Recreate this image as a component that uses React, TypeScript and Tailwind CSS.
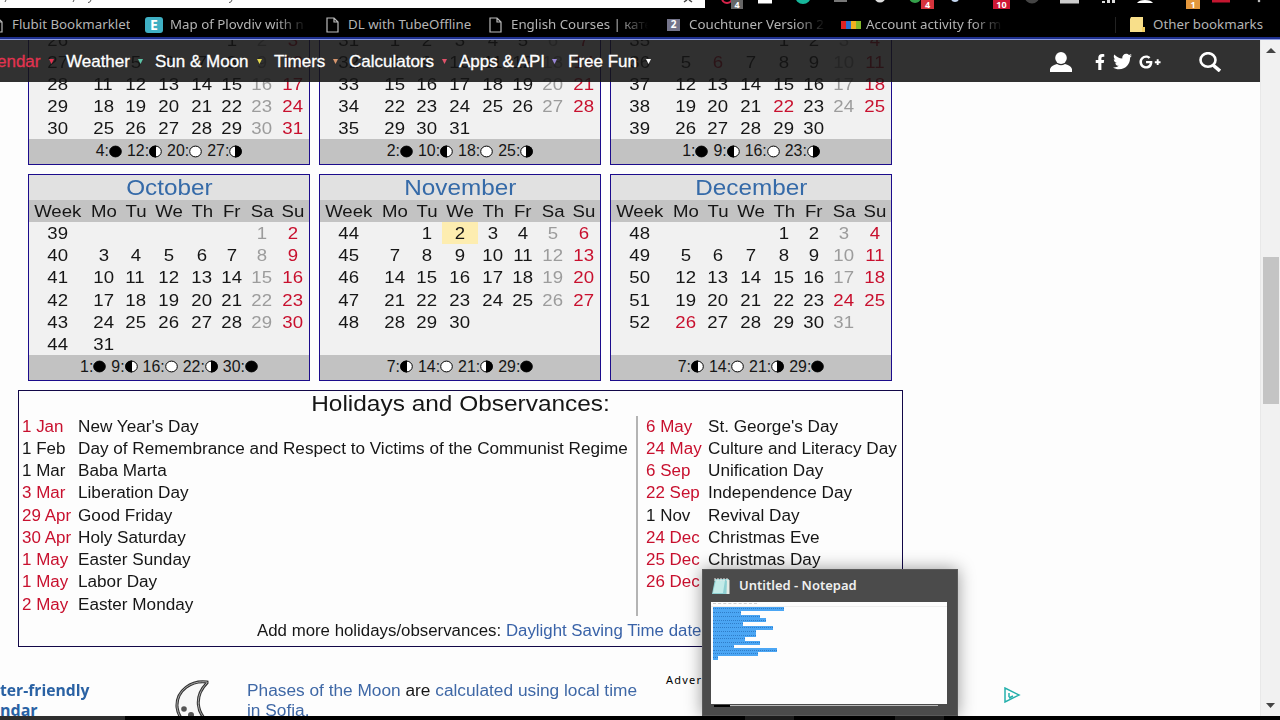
import { Fragment, type ReactNode } from 'react';
import { FaFacebookF, FaGooglePlusG, FaTwitter } from 'react-icons/fa';
import clsx from 'clsx';

type Phase = 'new' | 'first' | 'full' | 'last';

interface Month {
  name: string;
  firstWeek: number;
  // empty cells before day 1
  offset: number;
  days: number;
  rows: number;
  holidays: number[];
  today?: number;
  moons: [number, Phase][];
}

const topMonths: Month[] = [
  { name: 'July', firstWeek: 26, offset: 4, days: 31, rows: 5, holidays: [], moons: [[4, 'new'], [12, 'first'], [20, 'full'], [27, 'last']] },
  { name: 'August', firstWeek: 31, offset: 0, days: 31, rows: 5, holidays: [], moons: [[2, 'new'], [10, 'first'], [18, 'full'], [25, 'last']] },
  { name: 'September', firstWeek: 35, offset: 3, days: 30, rows: 5, holidays: [6, 22], moons: [[1, 'new'], [9, 'first'], [16, 'full'], [23, 'last']] },
];

const bottomMonths: Month[] = [
  { name: 'October', firstWeek: 39, offset: 5, days: 31, rows: 6, holidays: [], moons: [[1, 'new'], [9, 'first'], [16, 'full'], [22, 'last'], [30, 'new']] },
  { name: 'November', firstWeek: 44, offset: 1, days: 30, rows: 6, holidays: [], today: 2, moons: [[7, 'first'], [14, 'full'], [21, 'last'], [29, 'new']] },
  { name: 'December', firstWeek: 48, offset: 3, days: 31, rows: 6, holidays: [24, 26], moons: [[7, 'first'], [14, 'full'], [21, 'last'], [29, 'new']] },
];

const leftHolidays: [string, string, boolean][] = [
  ['1 Jan', "New Year's Day", true],
  ['1 Feb', 'Day of Remembrance and Respect to Victims of the Communist Regime', false],
  ['1 Mar', 'Baba Marta', false],
  ['3 Mar', 'Liberation Day', true],
  ['29 Apr', 'Good Friday', true],
  ['30 Apr', 'Holy Saturday', true],
  ['1 May', 'Easter Sunday', true],
  ['1 May', 'Labor Day', true],
  ['2 May', 'Easter Monday', true],
];

const rightHolidays: [string, string, boolean][] = [
  ['6 May', "St. George's Day", true],
  ['24 May', 'Culture and Literacy Day', true],
  ['6 Sep', 'Unification Day', true],
  ['22 Sep', 'Independence Day', true],
  ['1 Nov', 'Revival Day', false],
  ['24 Dec', 'Christmas Eve', true],
  ['25 Dec', 'Christmas Day', true],
  ['26 Dec', '', true],
];

const MONTH_GRID = 'grid grid-cols-[57.5px_34px_30px_36px_30.5px_29.5px_30.5px_32px]';

function Wide({ children, className = 'scale-x-[1.07]' }: { children: ReactNode; className?: string }) {
  return <span className={clsx('inline-block whitespace-nowrap', className)}>{children}</span>;
}

function Moon({ phase }: { phase: Phase }) {
  return (
    <svg width="13" height="13" viewBox="0 0 13 13" className="shrink-0">
      <ellipse cx="6.5" cy="6.5" rx="5.8" ry="5.4" fill={phase === 'new' ? '#000' : '#fff'} stroke="#000" />
      {phase === 'first' && <path d="M7 0.600H6.500A6.300 5.900 0 0 0 6.500 12.400H7z" />}
      {phase === 'last' && <path d="M6 0.600H6.500A6.300 5.900 0 0 1 6.500 12.400H6z" />}
    </svg>
  );
}

function MonthCard({ month }: { month: Month }) {
  const weeks = Array.from({ length: month.rows }, (_, i) => i);
  return (
    <div className="w-[282px] border border-[#1c0c8c] bg-[#f1f1f1] text-[17.4px] text-[#161616]">
      <div className="flex h-[25px] items-center justify-center bg-[#e1e1e1] text-[22.7px] text-[#356aa8]">
        <Wide>{month.name}</Wide>
      </div>
      <div className={clsx(MONTH_GRID, 'h-[22px] bg-[#c3c3c3] text-center leading-[22px]')}>
        {['Week', 'Mo', 'Tu', 'We', 'Th', 'Fr', 'Sa', 'Su'].map((d) => (
          <Wide key={d}>{d}</Wide>
        ))}
      </div>
      <div className={MONTH_GRID}>
        {weeks.map((w) => (
          <Fragment key={w}>
            <div className="h-[22.2px] text-center leading-[22.2px]">
              {w * 7 + 1 - month.offset <= month.days && <Wide>{month.firstWeek + w}</Wide>}
            </div>
            {[0, 1, 2, 3, 4, 5, 6].map((d) => {
              const day = w * 7 + d + 1 - month.offset;
              const shown = day >= 1 && day <= month.days;
              const red = d === 6 || month.holidays.includes(day);
              return (
                <div
                  key={d}
                  className={clsx(
                    'h-[22.2px] text-center leading-[22.2px]',
                    red ? 'text-[#c8102e]' : d === 5 && 'text-[#9c9c9c]',
                    day === month.today && 'bg-[#fdedb0]'
                  )}
                >
                  {shown && <Wide>{day}</Wide>}
                </div>
              );
            })}
          </Fragment>
        ))}
      </div>
      <div className="flex h-[24.5px] items-center justify-center gap-[5px] bg-[#c2c2c2] pb-px text-[15.9px]">
        {month.moons.map(([day, phase]) => (
          <span key={day} className="flex items-center">
            {day}:<Moon phase={phase} />
          </span>
        ))}
      </div>
    </div>
  );
}

function HolidayList({ items, dateWidth }: { items: [string, string, boolean][]; dateWidth: string }) {
  return (
    <div>
      {items.map(([date, name, red], i) => (
        <div key={i} className="flex h-[22.25px] items-center">
          <span className={clsx('shrink-0', dateWidth, red && 'text-[#c8102e]')}>
            <Wide className="origin-left scale-x-[1.06]">{date}</Wide>
          </span>
          <Wide className="origin-left scale-x-[1.072]">{name}</Wide>
        </div>
      ))}
    </div>
  );
}

function DocIcon() {
  return (
    <svg width="13" height="16" viewBox="0 0 13 16" fill="none" stroke="#bbb" strokeWidth="1.2">
      <path d="M1 1h7l4 4v10H1zM8 1v4h4" />
    </svg>
  );
}

function Bookmark({ icon, label, className, fade }: { icon: ReactNode; label: string; className: string; fade?: boolean }) {
  return (
    <div className={clsx('flex shrink-0 items-center', className)}>
      <div className="flex w-[22px] shrink-0">{icon}</div>
      <span
        className={clsx(
          'overflow-hidden whitespace-nowrap',
          fade && 'w-[137px] [mask-image:linear-gradient(to_right,#000_78%,transparent)]'
        )}
      >
        {label}
      </span>
    </div>
  );
}

function BrowserTop() {
  return (
    <div className="h-10 bg-black">
      <svg width="1280" height="10" viewBox="0 0 1280 10" className="block">
        <path d="M0 0H705V8H0z" fill="#fdfdfd" />
        <path d="M6 0l-1 2M74 0l-1 2M91 0q-1 3-3 2.500M232 0q-1 3-3 2.500" stroke="#555" fill="none" />
        <path d="M684 2l3-2M692 2l-3-2" stroke="#444" strokeWidth="1.500" />
        <circle cx="727" cy="-2" r="5" fill="none" stroke="#d8234a" strokeWidth="2" />
        <path d="M731 0h12v9h-12z" fill="#666" />
        <path d="M758 0h14v3.500h-14z" fill="#fff" />
        <circle cx="803" cy="-4" r="8" fill="#17b79b" />
        <path d="M834 0h13v2h-13z" fill="#777" />
        <circle cx="880" cy="-3" r="5.500" fill="#ddd" />
        <circle cx="915" cy="-3" r="6" fill="#34a04a" />
        <path d="M921 0h13v9h-13z" fill="#d5333c" />
        <circle cx="955" cy="-2" r="4" fill="#c5d8f2" />
        <path d="M993 0h17v9h-17z" fill="#cf1734" />
        <circle cx="1032" cy="-4" r="7.500" fill="#444" />
        <path d="M1060 0h19v3.500h-19z" fill="#ccc" />
        <path d="M1102 1h3v2h-3zM1107 0h3v3h-3zM1112 0h3v3h-3z" fill="#ddd" />
        <path d="M1137 3q2-3 8-3t8 3z" fill="#fff" />
        <path d="M1186 0h14v9h-14z" fill="#e3973c" />
        <path d="M1212 0h18v2.500h-18z" fill="#c41630" />
        <circle cx="1259" cy="1" r="1.300" fill="#bbb" />
        <g fill="#fff" fontSize="9" fontWeight="bold" fontFamily="Noto Sans, sans-serif" textAnchor="middle">
          <text x="737" y="7.500">4</text>
          <text x="927.500" y="7.500">4</text>
          <text x="1001.500" y="7.500">10</text>
          <text x="1193" y="7.500">1</text>
        </g>
      </svg>
      <div className="flex h-[27px] items-center overflow-hidden pt-[2px] font-['Noto_Sans',sans-serif] text-[13.3px] text-[#b4b4b4]">
        <Bookmark className="ml-[-10px] w-[155px]" icon={<DocIcon />} label="Flubit Bookmarklet" />
        <Bookmark
          className="w-[181px] [&>div]:w-[25px]"
          icon={<span className="flex h-[16px] w-[18px] items-center justify-center rounded-[3px] bg-[#3fb0c4] text-[14px] font-bold text-white">E</span>}
          label="Map of Plovdiv with n"
          fade
        />
        <Bookmark className="w-[163px]" icon={<DocIcon />} label="DL with TubeOffline" />
        <Bookmark className="w-[178px]" icon={<DocIcon />} label="English Courses | кате" fade />
        <Bookmark
          className="w-[174px]"
          icon={<span className="flex h-[12px] w-[13px] items-center justify-center bg-[#74748a] text-[10px] font-bold text-white">2</span>}
          label="Couchtuner Version 2"
          fade
        />
        <Bookmark
          className="w-[274px] [&>div]:w-[25px]"
          icon={
            <svg width="20" height="8" viewBox="0 0 20 8">
              <path d="M0 0h5v8H0z" fill="#dd2222" />
              <path d="M5 0h5v8H5z" fill="#2870d0" />
              <path d="M10 0h5v8h-5z" fill="#f0b020" />
              <path d="M15 0h5v8h-5z" fill="#82b82c" />
            </svg>
          }
          label="Account activity for m"
          fade
        />
        <div className="mr-[14px] h-4 w-px bg-[#222]" />
        <Bookmark
          className="w-[150px] [&>div]:w-[23px]"
          icon={
            <svg width="15" height="15" viewBox="0 0 15 15">
              <path d="M1 0h12v10h2v5H0V2z" fill="#f8df8a" />
              <path d="M12 10h3v5h-3z" fill="#f1ce60" />
            </svg>
          }
          label="Other bookmarks"
        />
      </div>
      <div className="h-[2px] bg-[#1d2f8f]" />
      <div className="h-px bg-[#8c9be0]" />
    </div>
  );
}

const navItems = [
  { label: 'Weather', color: '#5cc4a8', width: 'w-[89px]', gap: 'gap-[8px]' },
  { label: 'Sun & Moon', color: '#e3d84e', width: 'w-[119px]', gap: 'gap-[8px]' },
  { label: 'Timers', color: '#d8966e', width: 'w-[75px]', gap: 'gap-[8px]' },
  { label: 'Calculators', color: '#e0526a', width: 'w-[110px]', gap: 'gap-[8px]' },
  { label: 'Apps & API', color: '#9a86d8', width: 'w-[109px]', gap: 'gap-[7px]' },
  { label: 'Free Fun', color: '#ffffff', width: 'w-[90px]', gap: 'gap-[9px]' },
];

function Caret({ color }: { color: string }) {
  return (
    <svg width="5" height="5" viewBox="0 0 5 5" fill={color}>
      <path d="M0 0h5L2.500 5z" />
    </svg>
  );
}

function SiteNav() {
  return (
    <div className="absolute inset-x-0 top-0 flex h-[42px] items-center bg-[#141414]/88 pt-[1px] text-[17px] text-white [-webkit-text-stroke:0.3px]">
      <div className="ml-[-3px] flex w-[69px] shrink-0 items-center gap-[9px] text-[#e23350]">
        <span>endar</span>
        <Caret color="#e23350" />
      </div>
      {navItems.map((item) => (
        <div key={item.label} className={clsx('flex shrink-0 items-center whitespace-nowrap', item.width, item.gap)}>
          <span>{item.label}</span>
          <Caret color={item.color} />
        </div>
      ))}
      <div className="ml-auto flex items-center pr-[39px]">
        <svg width="22" height="20" viewBox="0 0 22 20" fill="#fff">
          <ellipse cx="11" cy="6" rx="5.800" ry="6" />
          <path d="M0 20v-3c1-3 4-4 7-5q4 2.500 8 0c3 1 6 2 7 5v3z" />
        </svg>
        <FaFacebookF className="ml-[22px] h-4 w-[12px]" />
        <FaTwitter className="ml-[7px] size-[19px]" />
        <FaGooglePlusG className="ml-[7px] h-[22px] w-[22px]" />
        <svg width="22" height="20" viewBox="0 0 22 20" fill="none" stroke="#fff" className="ml-[38px]">
          <ellipse cx="9" cy="8" rx="7.500" ry="6.800" strokeWidth="2.600" />
          <path d="M14 13l7 6" strokeWidth="3.600" />
        </svg>
      </div>
    </div>
  );
}

const selectedLines = [71, 28, 47, 53, 30, 60, 43, 43, 32, 47, 21, 64, 45, 5];

function NotepadPreview() {
  return (
    <div className="absolute left-[702px] top-[529px] h-[147px] w-[256px] border border-[#5a5a5a] bg-[#4b4b4b] px-2 shadow-[0_0_16px_rgba(0,0,0,0.4)]">
      <div className="flex h-8 items-center gap-[8px] font-['Noto_Sans',sans-serif] text-[13px] font-semibold text-[#f0f0f0]">
        <svg width="20" height="18" viewBox="0 0 20 18">
          <path d="M4 2h14l-1 15H1z" fill="#8fd0d2" />
          <path d="M5 3h9l-2 13H2z" fill="#c3ebe8" />
          <path d="M4 1v3M7 1v3M10 1v3M13 1v3M16 1v3" stroke="#e8e8e8" />
          <path d="M16 3h2.500v14h-3z" fill="#e4ece6" />
        </svg>
        <span className="whitespace-nowrap">Untitled - Notepad</span>
      </div>
      <div className="h-[102px] w-[236px] bg-[#fdfdfd] pt-[1px]">
        <div className="ml-[2px] h-[2px] w-[44px] border-t border-dashed border-[#ccc]" />
        <div className="h-[2px] border-b border-[#eee]" />
        {selectedLines.map((w, i) => (
          <div key={i} className="ml-[2px] flex h-[3.75px] items-center bg-[#4ba6f4]" style={{ width: w }}>
            <div className="w-full border-t border-dotted border-[#2f7dc8]" />
          </div>
        ))}
      </div>
      <div className="ml-[3px] mt-[1px] flex w-[224px]">
        <div className="h-[2px] w-[16px] bg-black" />
        <div className="h-px flex-1 bg-[#bbb]" />
      </div>
    </div>
  );
}

function Scrollbar() {
  return (
    <div className="flex w-5 flex-col items-center border-l border-[#e8e8e8] bg-[#f1f1f1]">
      <svg width="10" height="5" viewBox="0 0 10 5" className="mt-[8px]" fill="#444">
        <path d="M0 5L5 0l5 5z" />
      </svg>
      <div className="mt-[204px] h-[147px] w-[16px] bg-[#c4c4c4]" />
      <svg width="9" height="5" viewBox="0 0 9 5" className="mb-[8px] mt-auto" fill="#444">
        <path d="M0 0h9L4.500 5z" />
      </svg>
    </div>
  );
}

export default function App() {
  return (
    <div className="flex h-[720px] w-[1280px] flex-col overflow-hidden bg-black font-['Liberation_Sans',Arial,sans-serif]">
      <BrowserTop />
      <div className="relative flex h-[676px] overflow-hidden bg-[#fdfdfd]">
        <div className="relative w-[1260px] overflow-hidden text-[16px] text-[#161616]">
          <div className="ml-[28px] mt-[-59.5px] flex gap-[9px]">
            {topMonths.map((m) => (
              <MonthCard key={m.name} month={m} />
            ))}
          </div>
          <div className="ml-[28px] mt-[9px] flex gap-[9px]">
            {bottomMonths.map((m) => (
              <MonthCard key={m.name} month={m} />
            ))}
          </div>

          <div className="ml-[18px] mt-[9px] h-[257px] w-[885px] border border-[#120848] bg-[#fdfdfd]">
            <div className="flex h-[25px] items-center justify-center text-[22px]">
              <Wide className="scale-x-[1.11]">Holidays and Observances:</Wide>
            </div>
            <div className="flex h-[200px]">
              <div className="w-[619px] shrink-0 border-r-2 border-[#b4b4b4] pl-[3px]">
                <HolidayList items={leftHolidays} dateWidth="w-[56px]" />
              </div>
              <div className="pl-[8px]">
                <HolidayList items={rightHolidays} dateWidth="w-[62px]" />
              </div>
            </div>
            <div className="flex h-[31px] items-center pl-[238px]">
              <Wide className="origin-left scale-x-[1.052]">
                Add more holidays/observances: <span className="text-[#3a63a8]">Daylight Saving Time date</span>
              </Wide>
            </div>
          </div>

          <div className="mt-[33.5px] flex items-start leading-[20px]">
            <div className="w-[174px] whitespace-nowrap font-['Open_Sans',sans-serif] text-[16px] font-bold text-[#2a62a4]">
              <span className="inline-block origin-left scale-x-[0.98]">ter-friendly</span>
              <br />
              ndar
            </div>
            <svg width="36" height="44" viewBox="0 0 36 44" className="w-[73px]" preserveAspectRatio="xMinYMin">
              <path d="M33 2C18 0 2 10 3 27c1 8 5 13 9 16h24C22 34 20 16 33 3z" fill="#f8f8f8" stroke="#333" strokeWidth="3" />
              <path d="M33 2C18 0 2 10 3 27c1 8 5 13 9 16h24C22 34 20 16 33 3z" fill="none" stroke="#aaa" />
              <circle cx="10" cy="29" r="2.800" fill="#555" />
              <circle cx="17" cy="35" r="3" fill="#555" />
            </svg>
            <div className="mt-[1px] w-[419px] text-[#3f68a6]">
              <Wide className="origin-left scale-x-[1.08]">
                Phases of the Moon <span className="text-[#161616]">are</span> calculated using local time
                <br />
                in Sofia.
              </Wide>
            </div>
            <div className="mt-[-10px] w-[338px] font-['Noto_Sans',sans-serif] text-[11px] tracking-[1.2px] text-black">Adver</div>
            <svg width="17" height="16" viewBox="0 0 17 16" fill="none" stroke="#24b0ac" strokeWidth="1.500" className="mt-[7px]">
              <path d="M1 1v14l14-7zM5 6v4M5 11l4-2" />
            </svg>
          </div>

          <SiteNav />
        </div>
        <Scrollbar />
        <NotepadPreview />
      </div>
      <div className="flex h-1">
        <div className="w-[125px] bg-[#2e2e2e]" />
        <div className="ml-[620px] w-[49px] bg-[#1c1c1c]" />
        <div className="ml-[101px] w-[49px] bg-[#1c1c1c]" />
      </div>
    </div>
  );
}
